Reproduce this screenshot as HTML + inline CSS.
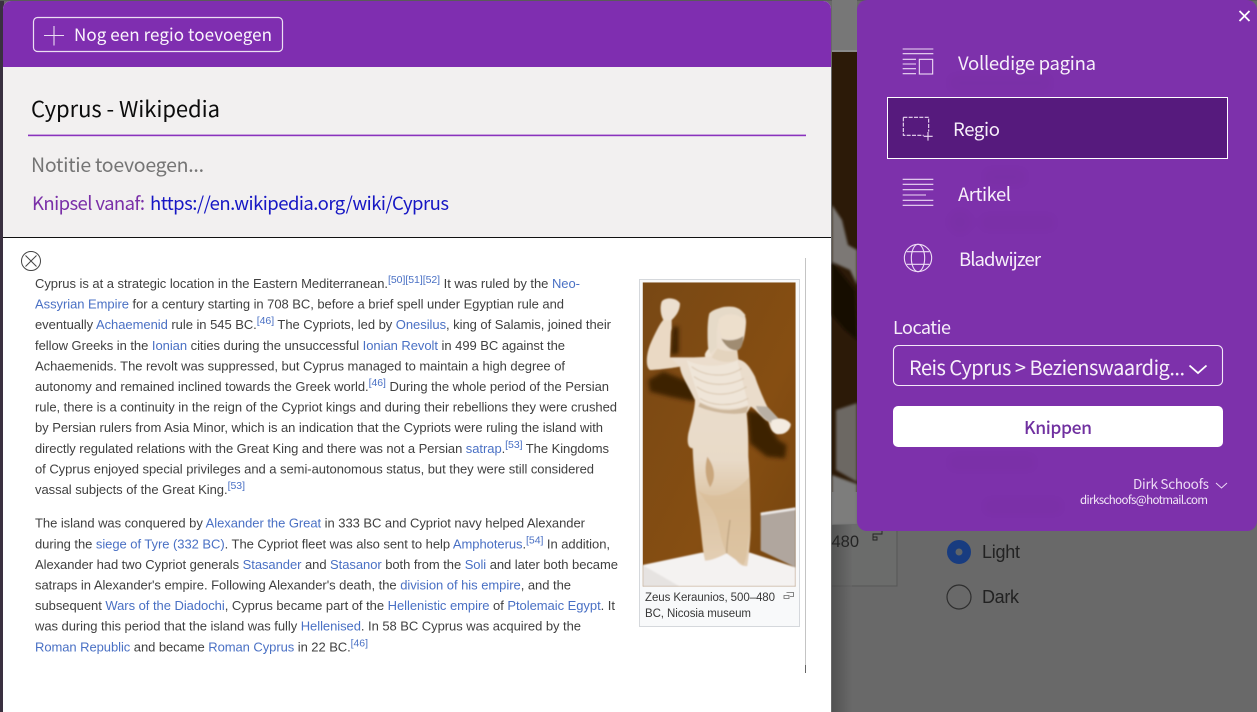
<!DOCTYPE html>
<html lang="nl">
<head>
<meta charset="utf-8">
<title>Cyprus - Wikipedia</title>
<style>
html,body{margin:0;padding:0;width:1257px;height:712px;overflow:hidden;background:#666}
svg{display:block}
.ui{font-family:"Noto Sans CJK SC","Liberation Sans",sans-serif}
.wiki{font-family:"Liberation Sans",Arial,sans-serif;font-size:13px;fill:#404040}
.wiki .l{fill:#4a70c4}
.wiki .s{fill:#4a70c4;font-size:10.5px}
.lw{fill:#f7effa}
</style>
</head>
<body>
<svg width="1257" height="712" viewBox="0 0 1257 712" xmlns="http://www.w3.org/2000/svg">
<defs>
<filter id="b1" x="-5%" y="-5%" width="110%" height="110%"><feGaussianBlur stdDeviation="2"/></filter>
<filter id="b2" x="-20%" y="-20%" width="140%" height="140%"><feGaussianBlur stdDeviation="6"/></filter>
<filter id="b3" x="-30%" y="-30%" width="160%" height="160%"><feGaussianBlur stdDeviation="5"/></filter>
<filter id="bg" x="-20%" y="-5%" width="140%" height="110%"><feGaussianBlur stdDeviation="1.2"/></filter>
<filter id="soft" x="0" y="0" width="100%" height="100%"><feGaussianBlur stdDeviation="0.35"/></filter>
<linearGradient id="wall" x1="0" y1="0" x2="1" y2="1"><stop offset="0" stop-color="#784814"/><stop offset=".6" stop-color="#864e12"/><stop offset="1" stop-color="#74440e"/></linearGradient>
<linearGradient id="legs" x1="0" y1="0" x2="0" y2="1"><stop offset="0" stop-color="#ecdfcf"/><stop offset=".6" stop-color="#e8dac8"/><stop offset=".76" stop-color="#dcc3a2"/><stop offset="1" stop-color="#e3cfb5"/></linearGradient>
<linearGradient id="sh" x1="0" y1="0" x2="1" y2="0"><stop offset="0" stop-color="#3f3f3f"/><stop offset="1" stop-color="#696969"/></linearGradient>
</defs>

<!-- dimmed page behind -->
<rect width="1257" height="712" fill="#696969"/>
<rect x="0" y="0" width="4" height="712" fill="#3a3040"/>
<rect x="0" y="0" width="1257" height="1" fill="#5a5a5a"/>
<rect x="832" y="0" width="25" height="52" fill="#777"/>
<rect x="832" y="50" width="25" height="2" fill="#8b8b8b"/>
<rect x="832" y="52" width="25" height="440" fill="#2c1a08"/>
<g filter="url(#bg)">
<path d="M832 205 L842 220 L848 245 L857 250 L857 285 L850 270 L832 262Z" fill="#7b7875"/>
<path d="M832 262 L855 290 L857 330 L857 340 L845 330 L832 315Z" fill="#150d05"/>
<path d="M836 410 L857 403 L857 482 L836 470Z" fill="#6c6864"/>
<path d="M832 475 L857 484 L857 525 L832 525Z" fill="#7d7d7c"/>
</g>
<rect x="832" y="524" width="65" height="62" fill="#6b6c6b"/>
<path d="M832 586H897V524" fill="none" stroke="#565656"/>
<rect x="832" y="525" width="20" height="187" fill="url(#sh)" opacity=".55"/>
<text x="831.500" y="547" font-family="'Liberation Sans',sans-serif" font-size="16.500" fill="#242424" textLength="27.500" lengthAdjust="spacing">480</text>
<path d="M873 537V534H882V531M873 537H877V540H873Z" fill="none" stroke="#222" stroke-width=".9"/>
<circle cx="959" cy="552" r="7.750" fill="#5f6468" stroke="#183c80" stroke-width="8.500"/>
<circle cx="959" cy="597" r="12" fill="none" stroke="#2e2e2e" stroke-width="1.200"/>
<text x="982" y="558" font-family="'Liberation Sans',sans-serif" font-size="18" fill="#222" textLength="38" lengthAdjust="spacing">Light</text>
<text x="982" y="603" font-family="'Liberation Sans',sans-serif" font-size="18" fill="#222" textLength="37" lengthAdjust="spacing">Dark</text>

<!-- left panel -->
<path d="M3 712V9a8 8 0 0 1 8-8H823a8 8 0 0 1 8 8V712Z" fill="#fff"/>
<path d="M3 67V9a8 8 0 0 1 8-8H823a8 8 0 0 1 8 8V67Z" fill="#7f2eb0"/>
<rect x="3" y="67" width="828" height="170" fill="#f2f0f0"/>
<rect x="3" y="237" width="828" height="1" fill="#111"/>
<rect x="33.500" y="17.500" width="249" height="34" rx="4" fill="none" stroke="#ecdff3" stroke-width="1.200"/>
<path d="M44 35.500H64M54 26V45.500" stroke="#eadcf2" stroke-width="1.100" fill="none"/>
<text class="ui" x="74" y="41" font-size="17" fill="#fbf5fd" textLength="198" lengthAdjust="spacing">Nog een regio toevoegen</text>
<text class="ui" x="31" y="117" font-size="22" fill="#0c0c0c" textLength="189" lengthAdjust="spacing">Cyprus - Wikipedia</text>
<rect x="28" y="134.600" width="778" height="1.600" fill="#8a32bd"/>
<text class="ui" x="31" y="172" font-size="19.500" fill="#757575" textLength="173" lengthAdjust="spacing">Notitie toevoegen...</text>
<text class="ui" x="32" y="210" font-size="18.500" fill="#7a2fa8" textLength="113" lengthAdjust="spacing">Knipsel vanaf:</text>
<text class="ui" x="150" y="210" font-size="18.500" fill="#1616c4" textLength="299" lengthAdjust="spacing">https://en.wikipedia.org/wiki/Cyprus</text>

<!-- article close -->
<circle cx="31" cy="261" r="9.500" fill="none" stroke="#444" stroke-width="1"/>
<path d="M25.500 255.500L36.500 266.500M36.500 255.500L25.500 266.500" stroke="#444" stroke-width="1" fill="none"/>
<rect x="805" y="258" width="1" height="414" fill="#c4c4c4"/>
<rect x="805" y="665" width="1" height="8" fill="#666"/>

<!-- article text -->
<g class="wiki" filter="url(#soft)">
<text x="35" y="288" textLength="545" lengthAdjust="spacing">Cyprus is at a strategic location in the Eastern Mediterranean.<tspan class="s" dy="-5">[50][51][52]</tspan><tspan dy="5"> It was ruled by the </tspan><tspan class="l">Neo-</tspan></text>
<text x="35" y="308.600" textLength="529" lengthAdjust="spacing"><tspan class="l">Assyrian Empire</tspan> for a century starting in 708 BC, before a brief spell under Egyptian rule and</text>
<text x="35" y="329.200" textLength="576" lengthAdjust="spacing">eventually <tspan class="l">Achaemenid</tspan> rule in 545 BC.<tspan class="s" dy="-5">[46]</tspan><tspan dy="5"> The Cypriots, led by </tspan><tspan class="l">Onesilus</tspan>, king of Salamis, joined their</text>
<text x="35" y="349.800" textLength="530" lengthAdjust="spacing">fellow Greeks in the <tspan class="l">Ionian</tspan> cities during the unsuccessful <tspan class="l">Ionian Revolt</tspan> in 499 BC against the</text>
<text x="35" y="370.400" textLength="530" lengthAdjust="spacing">Achaemenids. The revolt was suppressed, but Cyprus managed to maintain a high degree of</text>
<text x="35" y="391" textLength="574" lengthAdjust="spacing">autonomy and remained inclined towards the Greek world.<tspan class="s" dy="-5">[46]</tspan><tspan dy="5"> During the whole period of the Persian</tspan></text>
<text x="35" y="411.600" textLength="582" lengthAdjust="spacing">rule, there is a continuity in the reign of the Cypriot kings and during their rebellions they were crushed</text>
<text x="35" y="432.200" textLength="568" lengthAdjust="spacing">by Persian rulers from Asia Minor, which is an indication that the Cypriots were ruling the island with</text>
<text x="35" y="452.800" textLength="574" lengthAdjust="spacing">directly regulated relations with the Great King and there was not a Persian <tspan class="l">satrap</tspan>.<tspan class="s" dy="-5">[53]</tspan><tspan dy="5"> The Kingdoms</tspan></text>
<text x="35" y="473.400" textLength="559" lengthAdjust="spacing">of Cyprus enjoyed special privileges and a semi-autonomous status, but they were still considered</text>
<text x="35" y="494" textLength="210" lengthAdjust="spacing">vassal subjects of the Great King.<tspan class="s" dy="-5">[53]</tspan></text>

<text x="35" y="527.700" textLength="550" lengthAdjust="spacing">The island was conquered by <tspan class="l">Alexander the Great</tspan> in 333 BC and Cypriot navy helped Alexander</text>
<text x="35" y="548.300" textLength="575" lengthAdjust="spacing">during the <tspan class="l">siege of Tyre (332 BC)</tspan>. The Cypriot fleet was also sent to help <tspan class="l">Amphoterus</tspan>.<tspan class="s" dy="-5">[54]</tspan><tspan dy="5"> In addition,</tspan></text>
<text x="35" y="568.900" textLength="583" lengthAdjust="spacing">Alexander had two Cypriot generals <tspan class="l">Stasander</tspan> and <tspan class="l">Stasanor</tspan> both from the <tspan class="l">Soli</tspan> and later both became</text>
<text x="35" y="589.500" textLength="536" lengthAdjust="spacing">satraps in Alexander's empire. Following Alexander's death, the <tspan class="l">division of his empire</tspan>, and the</text>
<text x="35" y="610.100" textLength="580" lengthAdjust="spacing">subsequent <tspan class="l">Wars of the Diadochi</tspan>, Cyprus became part of the <tspan class="l">Hellenistic empire</tspan> of <tspan class="l">Ptolemaic Egypt</tspan>. It</text>
<text x="35" y="630.700" textLength="546" lengthAdjust="spacing">was during this period that the island was fully <tspan class="l">Hellenised</tspan>. In 58 BC Cyprus was acquired by the</text>
<text x="35" y="651.300" textLength="333" lengthAdjust="spacing"><tspan class="l">Roman Republic</tspan> and became <tspan class="l">Roman Cyprus</tspan> in 22 BC.<tspan class="s" dy="-5">[46]</tspan></text>
</g>

<!-- figure -->
<rect x="639.500" y="279.500" width="160" height="347" fill="#f8f9fa" stroke="#d5d8dc"/>
<g transform="translate(630 270) scale(.33333)">
<clipPath id="ph"><rect x="38" y="37" width="459" height="913"/></clipPath>
<g clip-path="url(#ph)">
<rect x="38" y="37" width="459" height="913" fill="url(#wall)"/>
<g filter="url(#b2)" fill="#3e2006">
<path d="M55 330 L100 305 L190 340 L195 395 L120 380 L60 365Z"/>
<path d="M128 170 L146 170 L146 250 L122 255Z"/>
<path d="M350 420 L400 430 L445 510 L470 525 L465 565 L410 560 L360 520Z"/>
</g>
<g filter="url(#b1)">
<path d="M392 728L497 712V892L392 842Z" fill="#b0a69e"/>
<path d="M392 728L497 712V720L392 736Z" fill="#ece8e6"/>
<path d="M38 885L215 848H360L497 892V950H38Z" fill="#f4f2f1"/>
<path d="M38 885L150 950H38Z" fill="#e6e3e1"/>
<path d="M95 95C105 80 140 82 150 100C150 125 135 140 125 150L125 175C118 210 110 240 120 262L170 262C200 262 225 262 240 258C232 240 232 200 234 165C238 125 265 108 300 110C330 110 350 130 348 160C346 190 340 235 320 240L325 268C345 272 360 290 375 320C385 350 400 385 412 410L445 445C470 445 485 460 482 465C478 485 460 495 440 492C420 485 420 465 415 455C395 445 375 415 362 410L350 430C355 480 355 520 355 560C362 650 362 720 362 780C360 830 355 870 352 888C335 890 325 880 318 870L290 850C270 860 245 872 225 872C215 830 215 780 205 720C195 650 190 590 188 535C175 535 170 520 175 490C185 450 195 420 195 390C170 340 150 310 150 290C120 295 80 300 60 300C45 290 50 250 60 225C75 190 90 160 100 150C90 130 90 110 95 95Z" fill="url(#legs)"/>
<path d="M170 270C205 290 270 295 322 272L355 405C310 420 260 420 210 395Z" fill="#efe5d8"/>
<g fill="none" stroke="#d3bfa6" stroke-width="3.500" opacity=".7">
<path d="M185 290C225 320 290 325 335 295"/>
<path d="M192 320C235 350 295 350 342 325"/>
<path d="M200 350C240 380 300 380 350 350"/>
<path d="M210 385C250 410 310 410 355 385"/>
</g>
<path d="M210 398C260 425 310 425 355 408L350 428C300 438 240 425 205 410Z" fill="#cdb89c"/>
<path d="M100 150L124 152L120 262L150 290L60 300C50 285 52 250 60 225C75 190 90 165 100 150Z" fill="#ead9c4"/>
<path d="M232 240C224 250 222 258 228 262L246 258C240 250 238 245 236 235Z" fill="#efe3d2"/>
<path d="M238 130C262 106 325 105 346 135L342 148C320 128 285 128 268 146C260 170 258 205 262 232L240 250C232 220 230 160 238 130Z" fill="#e6dac8"/>
<path d="M266 150C285 128 322 130 344 150C346 175 340 195 332 205H278C270 190 266 170 266 150Z" fill="#eddfcc"/>
<path d="M262 235C285 245 310 245 322 241L325 268C300 280 270 278 245 262Z" fill="#e4d4be"/>
<path d="M274 206C292 214 320 212 340 198C340 222 334 238 322 241C300 242 284 226 274 206Z" fill="#a08c72"/>
<path d="M232 560C250 585 262 620 240 652C224 620 224 590 232 560Z" fill="#c9a67c"/>
<path d="M202 660C240 690 310 680 358 620L362 780C350 810 355 860 340 885L290 850C265 800 270 740 235 705Z" fill="#d9bc96" opacity=".6"/>
<path d="M378 408L412 410L445 445L425 460C400 445 385 430 378 408Z" fill="#b9b0a4"/>
<path d="M425 452C445 440 475 450 482 465C478 485 460 495 440 492C425 486 420 465 425 452Z" fill="#f3ebe0"/>
<path d="M300 750C295 790 290 820 290 850" stroke="#b49a78" stroke-width="3" fill="none"/>
</g>
</g>
</g>
<text x="645" y="601" font-family="'Liberation Sans',sans-serif" font-size="11.500" fill="#383838" textLength="130" lengthAdjust="spacing" filter="url(#soft)">Zeus Keraunios, 500–480</text>
<text x="645" y="617" font-family="'Liberation Sans',sans-serif" font-size="11.500" fill="#383838" textLength="106" lengthAdjust="spacing" filter="url(#soft)">BC, Nicosia museum</text>
<path d="M786.500 592.500H793.500V596.500H790M784 595.500H789V598.500H784Z" fill="none" stroke="#666" stroke-width=".8"/>

<!-- right panel -->
<g>
<path d="M867 0H1247a10 10 0 0 1 10 10V521a10 10 0 0 1-10 10H867a10 10 0 0 1-10-10V10a10 10 0 0 1 10-10Z" fill="#7d31ab"/>
<g filter="url(#b3)" fill="#000" opacity=".02">
<rect x="950" y="76" width="100" height="14"/>
<rect x="985" y="170" width="40" height="14"/>
<circle cx="960" cy="222" r="11"/>
<rect x="982" y="216" width="72" height="13"/>
<rect x="950" y="456" width="84" height="13"/>
<rect x="985" y="500" width="76" height="13"/>
</g>
<rect x="887.500" y="97.500" width="340" height="61" fill="#561a7d" stroke="#fff" stroke-width="1"/>

<g transform="translate(850 0) scale(.33333)" fill="none" stroke="#eedcf5" stroke-width="3.300">
<!-- full page -->
<path d="M158 147H250M158 161H250M158 178H198M158 192H198M158 206H198M158 221H198"/>
<rect x="208" y="178" width="40" height="44"/>
<!-- region -->
<path d="M160 352H236V395M160 352V406H221" stroke-dasharray="12 4"/>
<path d="M221 409H248M234 396V422"/>
<!-- article -->
<path d="M158 538H250M158 553H250M158 569H250M158 585H228M158 601H250M158 616H250"/>
<!-- globe -->
<circle cx="204" cy="774" r="41"/>
<ellipse cx="204" cy="774" rx="20" ry="41"/>
<path d="M170 755H238M170 793H238"/>
</g>
<path d="M1239.500 11L1249.500 21M1249.500 11L1239.500 21" stroke="#fff" stroke-width="1.800" fill="none"/>

<text class="ui lw" x="958" y="70" font-size="18.500" textLength="138" lengthAdjust="spacing">Volledige pagina</text>
<text class="ui lw" x="953" y="136" font-size="18.500" textLength="47" lengthAdjust="spacing">Regio</text>
<text class="ui lw" x="958" y="201" font-size="18.500" textLength="53" lengthAdjust="spacing">Artikel</text>
<text class="ui lw" x="959" y="266" font-size="18.500" textLength="82" lengthAdjust="spacing">Bladwijzer</text>
<text class="ui lw" x="893" y="334" font-size="18" textLength="58" lengthAdjust="spacing">Locatie</text>
<rect x="893.500" y="345.500" width="329" height="40" rx="5" fill="none" stroke="#f3e8f8" stroke-width="1.100"/>
<text class="ui lw" x="909" y="375" font-size="20" textLength="276" lengthAdjust="spacing">Reis Cyprus &gt; Bezienswaardig...</text>
<path d="M1189.500 365.500L1198 373L1206.500 365.500" fill="none" stroke="#fff" stroke-width="1.800"/>
<rect x="893" y="406" width="330" height="41" rx="5" fill="#fff"/>
<text class="ui" x="1024" y="434" font-size="17.500" font-weight="500" fill="#7030a0" textLength="68" lengthAdjust="spacing">Knippen</text>
<text class="ui" x="1133" y="489" font-size="13.500" fill="#eedcf5" textLength="76" lengthAdjust="spacing">Dirk Schoofs</text>
<path d="M1216 483L1221.500 488L1227 483" fill="none" stroke="#eedcf5" stroke-width="1"/>
<text class="ui" x="1080" y="504" font-size="11.500" fill="#f3e8f8" textLength="128" lengthAdjust="spacing">dirkschoofs@hotmail.com</text>
</g>
</svg>
</body>
</html>
